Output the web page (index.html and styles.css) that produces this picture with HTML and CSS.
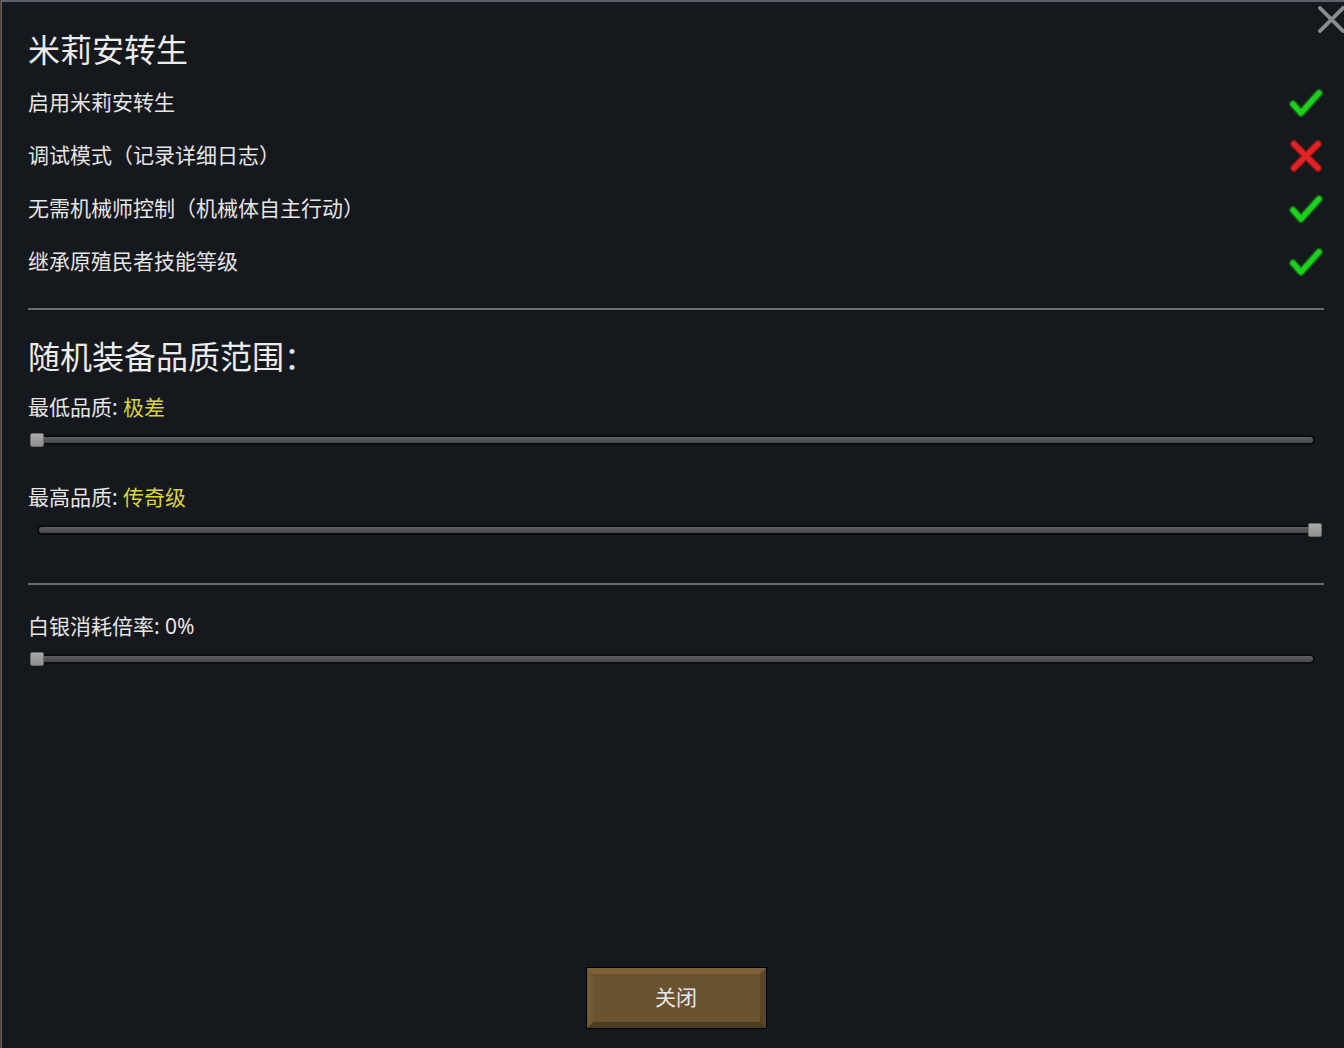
FILE: index.html
```html
<!DOCTYPE html>
<html lang="zh">
<head>
    <meta charset="UTF-8">
    <title>米莉安转生</title>
    <link rel="stylesheet" href="styles.css">
</head>
<body>
    <div class="window">
        <!-- Close button in the corner -->
        <button class="close-x" aria-label="关闭">
            <svg width="27" height="27" viewBox="0 0 27 27">
                <path d="M2 2 L25 25 M25 2 L2 25" stroke="#8a8c8e" stroke-width="3.8" stroke-linecap="square"/>
            </svg>
        </button>

        <h1 class="title">米莉安转生</h1>

        <!-- Toggle options -->
        <div class="option">
            <span>启用米莉安转生</span>
            <svg class="icon" width="34" height="32" viewBox="0 0 34 32">
                <path d="M4 17 L12 26 L30 6" class="check-outline"/>
                <path d="M4 17 L12 26 L30 6" class="check-fill"/>
            </svg>
        </div>
        <div class="option">
            <span>调试模式（记录详细日志）</span>
            <svg class="icon" width="34" height="32" viewBox="0 0 34 32">
                <path d="M5 4 L29 28 M29 4 L5 28" class="cross-outline"/>
                <path d="M5 4 L29 28 M29 4 L5 28" class="cross-fill"/>
            </svg>
        </div>
        <div class="option">
            <span>无需机械师控制（机械体自主行动）</span>
            <svg class="icon" width="34" height="32" viewBox="0 0 34 32">
                <path d="M4 17 L12 26 L30 6" class="check-outline"/>
                <path d="M4 17 L12 26 L30 6" class="check-fill"/>
            </svg>
        </div>
        <div class="option">
            <span>继承原殖民者技能等级</span>
            <svg class="icon" width="34" height="32" viewBox="0 0 34 32">
                <path d="M4 17 L12 26 L30 6" class="check-outline"/>
                <path d="M4 17 L12 26 L30 6" class="check-fill"/>
            </svg>
        </div>

        <hr class="divider first">

        <h2 class="section-title">随机装备品质范围：</h2>

        <div class="field-label">最低品质: <span class="value">极差</span></div>
        <div class="slider">
            <div class="track"></div>
            <div class="handle at-min"></div>
        </div>

        <div class="field-label spaced">最高品质: <span class="value">传奇级</span></div>
        <div class="slider">
            <div class="track"></div>
            <div class="handle at-max"></div>
        </div>

        <hr class="divider second">

        <div class="field-label">白银消耗倍率: 0%</div>
        <div class="slider">
            <div class="track"></div>
            <div class="handle at-min"></div>
        </div>

        <div class="footer">
            <button class="close-btn">关闭</button>
        </div>
    </div>
</body>
</html>
```

FILE: styles.css
```css
/* General Styles */
html, body {
    margin: 0;
    padding: 0;
    height: 100%;
    overflow: hidden;
}

body {
    background-color: #5a4330; /* world behind the dialog */
    font-family: "Noto Sans", "Noto Sans CJK SC", sans-serif;
    color: #e6e6e6;
}

.window {
    position: relative;
    box-sizing: border-box;
    width: 1349px;
    height: 1048px;
    margin-left: 1px;
    background-color: #15181d;
    border-top: 2px solid #5b626b;
    border-left: 1px solid #5b626b;
    padding: 28px 26px 20px 26px;
    display: flex;
    flex-direction: column;
}

.close-x {
    position: absolute;
    top: 4px;
    right: 5px;
    background: none;
    border: none;
    padding: 0;
    width: 27px;
    height: 27px;
    cursor: pointer;
}

.close-x svg {
    display: block;
}

.title {
    margin: 0 0 6px 0;
    font-size: 32px;
    font-weight: normal;
    line-height: 40px;
    color: #ececec;
}

/* Toggle rows */
.option {
    display: flex;
    justify-content: space-between;
    align-items: center;
    height: 53px;
    font-size: 21px;
}

.option span {
    padding-bottom: 4px; /* lift the text a little */
}

.option .icon {
    display: block;
    margin-right: 1px;
}

.check-outline {
    fill: none;
    stroke: #0f6a12;
    stroke-width: 8;
    stroke-linecap: round;
    stroke-linejoin: round;
}

.check-fill {
    fill: none;
    stroke: #1fd11f;
    stroke-width: 5;
    stroke-linecap: round;
    stroke-linejoin: round;
}

.cross-outline {
    fill: none;
    stroke: #8c1414;
    stroke-width: 8;
    stroke-linecap: round;
}

.cross-fill {
    fill: none;
    stroke: #e02424;
    stroke-width: 5;
    stroke-linecap: round;
}

.divider {
    border: none;
    height: 2px;
    background-color: #6b6d70;
    margin: 0;
}

.divider.first {
    margin-top: 20px;
}

.divider.second {
    margin-top: 45px;
}

.section-title {
    margin: 27px 0 15px 0;
    font-size: 32px;
    font-weight: normal;
    line-height: 40px;
    color: #ececec;
}

.field-label {
    font-size: 21px;
    line-height: 30px;
}

.field-label.spaced {
    margin-top: 34px;
}

.divider.second + .field-label {
    margin-top: 26px;
}

.value {
    color: #d8d43c;
}

/* Sliders */
.slider {
    position: relative;
    height: 16px;
    margin: 10px 2px 0 2px;
    display: flex;
    align-items: center;
}

.track {
    flex: 1;
    margin: 0 7px;
    height: 6px;
    border: 2px solid #0b0c0e;
    border-radius: 5px;
    background: linear-gradient(#5e5f61, #46474a);
}

.handle {
    position: absolute;
    top: 1px;
    width: 12px;
    height: 12px;
    background: linear-gradient(#a9a9a9, #8f8f8f);
    border: 1px solid #6c6c6c;
    border-radius: 2px;
}

.handle.at-min {
    left: 0;
}

.handle.at-max {
    right: 0;
}

/* Footer with close button */
.footer {
    margin-top: auto;
    display: flex;
    justify-content: center;
}

.close-btn {
    box-sizing: border-box;
    width: 179px;
    height: 60px;
    padding: 0 0 4px 0;
    font-family: inherit;
    font-size: 21px;
    color: #e8e8e8;
    background-color: #6b5330;
    border-style: solid;
    border-width: 6px;
    border-color: #7b6238 #5a4527 #4d3b21 #735a31;
    box-shadow: 0 0 0 1px #000;
    cursor: pointer;
}
```
